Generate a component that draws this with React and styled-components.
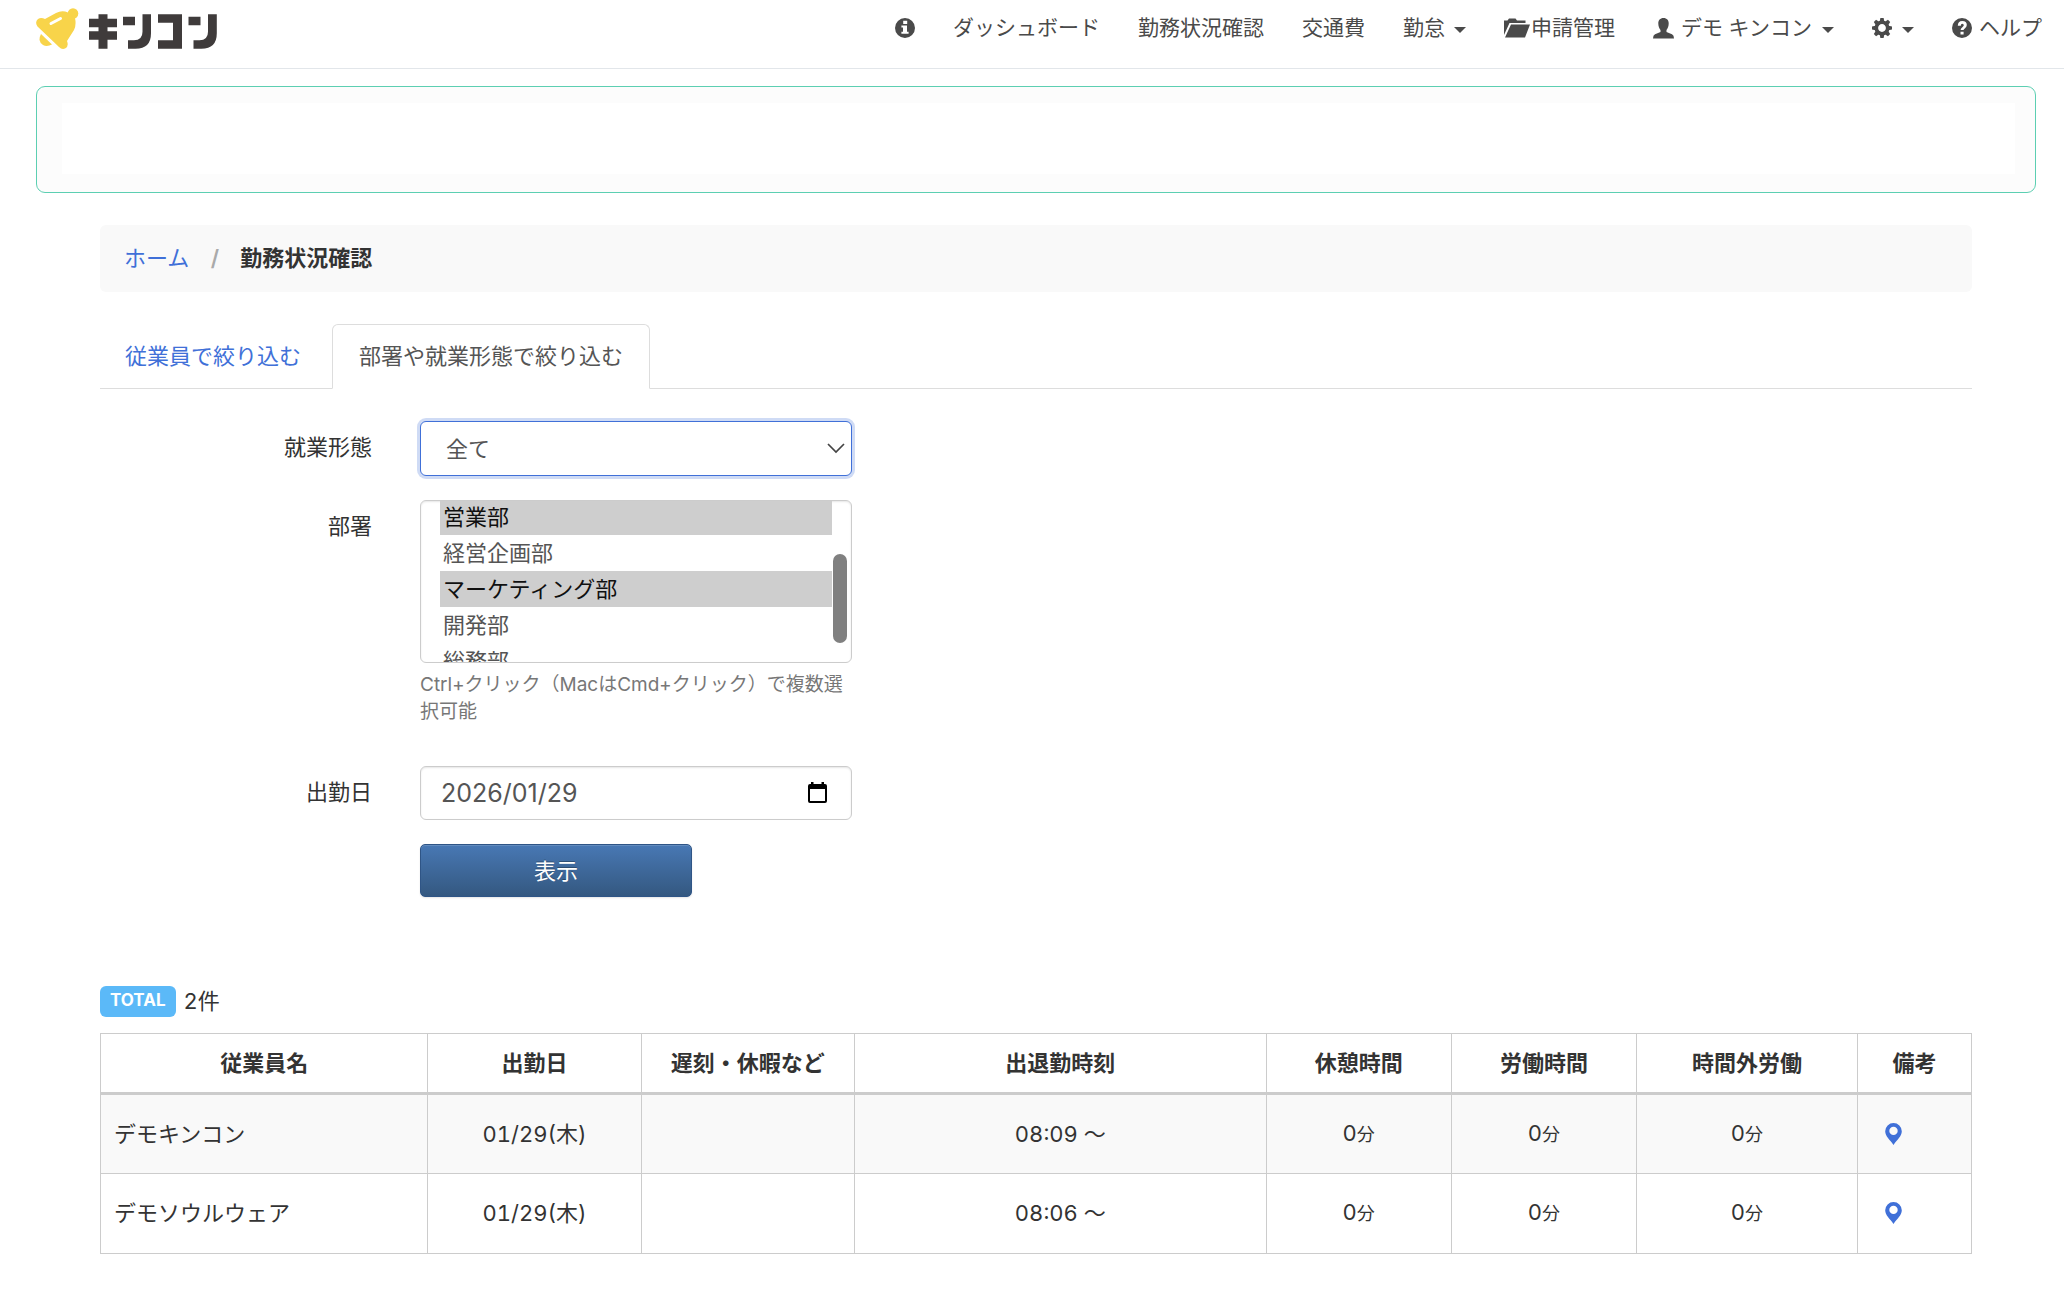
import React, { useEffect, useRef } from 'react';
import styled, { createGlobalStyle } from 'styled-components';

const FONT = `Inter, "Noto Sans CJK JP", sans-serif`;

const GlobalStyle = createGlobalStyle`
  *, *::before, *::after { box-sizing: border-box; }
  body {
    margin: 0;
    background: #fff;
    color: #333;
    font-family: ${FONT};
    font-size: 22px;
    line-height: 32px;
    font-variant-numeric: tabular-nums;
  }
  a { color: #4070d8; text-decoration: none; }
`;

/* ---------- header ---------- */
const Header = styled.header`
  display: flex;
  justify-content: space-between;
  height: 69px;
  padding: 0 22px 0 36px;
  border-bottom: 1px solid #e2e6ea;
`;
const Brand = styled.a`
  display: block;
  padding-top: 8px;
  height: 50px;
`;
const Nav = styled.nav`
  display: flex;
  gap: 38px;
  padding-top: 12px;
  font-size: 21px;
`;
const NavItem = styled.a`
  display: flex;
  align-items: center;
  gap: ${(p) => p.$gap || 0}px;
  height: 32px;
  color: #4a4a4a;
  white-space: nowrap;
  svg { display: block; flex: none; fill: currentColor; }
`;
const Caret = styled.span`
  margin: 4px 0 0 3px;
  border: 6px solid transparent;
  border-top-color: currentColor;
  border-bottom: 0;
`;

/* ---------- page ---------- */
const Notice = styled.section`
  height: 107px;
  margin: 17px 28px 32px 36px;
  padding: 16px 20px 18px 25px;
  border: 1px solid #5ccfb2;
  border-radius: 9px;
  background: #fcfcfc;
`;
const NoticeBody = styled.div`
  height: 100%;
  background: #fff;
`;
const Main = styled.main`
  padding: 0 92px 48px 100px;
`;
const Breadcrumb = styled.nav`
  display: flex;
  align-items: center;
  height: 67px;
  padding: 0 24px 2px;
  border-radius: 6px;
  background: #f9f9f9;
`;
const Slash = styled.span`
  width: 51px;
  text-align: center;
  color: #aaa;
  font-weight: 600;
`;
const Tabs = styled.div`
  display: flex;
  gap: 6px;
  margin-top: 32px;
  border-bottom: 1px solid #ddd;
`;
const Tab = styled.a`
  height: 65px;
  margin-bottom: -1px;
  padding: 15px ${(p) => (p.$active ? 26 : 24)}px;
  border: 1px solid ${(p) => (p.$active ? '#ddd' : 'transparent')};
  border-bottom-color: ${(p) => (p.$active ? '#fff' : 'transparent')};
  border-radius: 6px 6px 0 0;
  ${(p) => p.$active && 'background: #fff; color: #555;'}
`;

/* ---------- form ---------- */
const Form = styled.form`
  display: grid;
  grid-template-columns: 272px 432px;
  column-gap: 48px;
  row-gap: 24px;
  margin-top: 32px;
`;
const Label = styled.label`
  padding-top: 10px;
  text-align: right;
`;
const Field = styled.div`
  position: relative;
  grid-column: 2;
`;
const control = `
  display: block;
  width: 100%;
  border: 1px solid #ccc;
  border-radius: 6px;
  background: #fff;
  color: #555;
  font-family: ${FONT};
  font-size: 22px;
  outline: none;
`;
const Select = styled.select`
  ${control}
  appearance: none;
  height: 55px;
  padding: 0 25px;
  border-color: #4070d8;
  box-shadow: 0 0 0 3px rgba(64, 112, 216, 0.25);
`;
const FieldIcon = styled.svg`
  position: absolute;
  top: ${(p) => p.$top}px;
  right: ${(p) => p.$right}px;
  pointer-events: none;
`;
const ListBox = styled.select`
  ${control}
  height: 163px;
  padding: 0 19px;
  overflow: hidden;
  box-shadow: inset 0 1px 2px rgba(0, 0, 0, 0.1);
  option {
    height: 36px;
    padding: 0 3px 4px;
  }
`;
const ScrollThumb = styled.span`
  position: absolute;
  top: 54px;
  right: 5px;
  width: 14px;
  height: 89px;
  border-radius: 7px;
  background: #808080;
`;
const Help = styled.p`
  margin: 8px 0 17px;
  color: #777;
  font-size: 19px;
  line-height: 27px;
`;
const DateInput = styled.input`
  ${control}
  height: 54px;
  padding: 0 20px 1px;
  font-size: 25px;
  box-shadow: inset 0 1px 2px rgba(0, 0, 0, 0.1);
`;
const Submit = styled.button`
  grid-column: 2;
  width: 272px;
  height: 53px;
  padding: 0 0 3px;
  border: 1px solid #2f5586;
  border-radius: 5px;
  background: linear-gradient(#4878b4, #345880);
  box-shadow: inset 0 1px 0 rgba(255, 255, 255, 0.15), 0 1px 2px rgba(0, 0, 0, 0.1);
  color: #fff;
  font-family: ${FONT};
  font-size: 22px;
  text-shadow: 0 -1px 0 rgba(0, 0, 0, 0.3);
`;

/* ---------- results ---------- */
const Total = styled.div`
  display: flex;
  align-items: center;
  gap: 8px;
  margin-top: 88px;
`;
const Badge = styled.span`
  height: 31px;
  padding: 0 10px;
  border-radius: 6px;
  background: #5bb9f8;
  color: #fff;
  font-size: 17px;
  font-weight: 700;
  line-height: 29px;
`;
const Table = styled.table`
  width: 100%;
  margin-top: 16px;
  border-collapse: collapse;
  table-layout: fixed;
  th, td { border: 1px solid #ccc; padding: 0 13px 1px; }
  th { height: 60px; border-bottom-width: 3px; }
  td { height: 80px; }
  tbody tr:nth-child(odd) { background: #f9f9f9; }
  small { font-size: 18px; }
`;
const Col = styled.col`
  width: ${(p) => p.$width}%;
`;
const Td = styled.td`
  text-align: ${(p) => (p.$left ? 'left' : 'center')};
`;
const PinLink = styled.a`
  display: block;
  padding-left: 14px;
  svg { display: block; }
`;

/* ---------- drawings ---------- */
const Logo = () => (
  <svg width="182" height="42" viewBox="0 0 182 42" role="img" aria-label="キンコン">
    <g fill="#f8d44a">
      <circle cx="37" cy="5.500" r="5.300" />
      <path d="M1.500 18.500 Q-1.500 14 2 11 Q5 8.800 9 11 L20 5 Q26 2 32 4.500 L39 10 Q40.500 17 38 22 L31 33 Q33 38 29.500 40.300 Q26 42 23 39 Z" />
      <path d="M5 26 L16 36.500 Q11 39 7 37 Q1 33 5 26 Z" />
    </g>
    <path d="M15 15.500 L24.500 10.500" stroke="#fff" strokeWidth="3" strokeLinecap="round" />
    <g fill="#3f3b3b">
      <path d="M62.500 6.300h9v4.500h9.500v8.500h-9.500v4h9.500v8.500h-9.500v9h-9v-9h-9.500v-8.500h9.500v-4h-9.500v-8.500h9.500z" />
      <path d="M87 8.800h12v8.500h-12z M106.500 6.300h8.500v19q0 15.500-15.500 15.500h-7.500v-8.500h6q8.500 0 8.500-8.500z" />
      <path d="M122 6.300h24v34.500h-24v-8.500h15v-17.500h-15z" />
      <path d="M152.500 8.800h12v8.500h-12z M172 6.300h8.800v19q0 15.500-15.500 15.500h-7.800v-8.500h6q8.500 0 8.500-8.500z" />
    </g>
  </svg>
);
const InfoIcon = () => (
  <svg width="20" height="20" viewBox="0 0 20 20">
    <path fillRule="evenodd" d="M10 0a10 10 0 1 1 0 20a10 10 0 1 1 0-20z M8.200 2.800v3.200h4v-3.200z M6.400 7.600v1.800h1.600v4.400h-1.600v1.900h7.200v-1.900h-1.600v-6.200z" />
  </svg>
);
const HelpIcon = () => (
  <svg width="20" height="20" viewBox="0 0 20 20">
    <path fillRule="evenodd" d="M10 0a10 10 0 1 1 0 20a10 10 0 1 1 0-20z M5.800 7.800h3q0-2 1.500-2t1.500 1.500q0 .8-1.200 1.600q-2 1.200-2 3.200h3q0-.9 1.200-1.700q2-1.300 2-3.300q0-4-4.500-4t-4.500 4.700z M8.500 13.700v2.900h3.100v-2.900z" />
  </svg>
);
const FolderIcon = () => (
  <svg width="27" height="20" viewBox="0 0 27 20">
    <path d="M0 17V2.500h3.500L5 .5h6.500l1.500 2h8.500V5H5.500z M7 6.500h19L21 19.500H1z" />
  </svg>
);
const UserIcon = () => (
  <svg width="21" height="21" viewBox="0 0 21 21">
    <path d="M10.500 0c3.400 0 5.200 2.300 5.200 5.500c0 2.800-1 5-2.200 6.400v2l5.500 2.300q2 .9 2 4.300H0q0-3.400 2-4.300l5.500-2.300v-2c-1.200-1.400-2.200-3.600-2.200-6.400C5.300 2.300 7.100 0 10.500 0z" />
  </svg>
);
const CogIcon = () => (
  <svg width="20" height="20" viewBox="-10 -10 20 20">
    <circle r="5.700" fill="none" stroke="currentColor" strokeWidth="3.600" />
    {[0, 45, 90, 135, 180, 225, 270, 315].map((a) => (
      <path key={a} d="M-2.300-6.500L-1.600-10H1.600L2.300-6.500z" transform={`rotate(${a})`} />
    ))}
  </svg>
);
const PinIcon = () => (
  <svg width="17" height="22" viewBox="0 0 17 22" fill="#4070d8">
    <path fillRule="evenodd" d="M8.500 0a8.300 8.300 0 0 1 8.300 8.300c0 5-4.800 8.500-8.300 13.700C5 16.800.2 13.300.2 8.300A8.300 8.300 0 0 1 8.500 0z M8.500 3.700a4.200 4.200 0 1 0 0 8.400a4.200 4.200 0 1 0 0-8.400z" />
  </svg>
);

const COLUMNS = [
  ['従業員名', 17.5],
  ['出勤日', 11.4],
  ['遅刻・休暇など', 11.4],
  ['出退勤時刻', 22],
  ['休憩時間', 9.9],
  ['労働時間', 9.9],
  ['時間外労働', 11.8],
  ['備考', 6.1],
];
const ROWS = [
  { name: 'デモキンコン', date: '01/29(木)', time: '08:09 〜' },
  { name: 'デモソウルウェア', date: '01/29(木)', time: '08:06 〜' },
];
const DEPARTMENTS = ['営業部', '経営企画部', 'マーケティング部', '開発部', '総務部'];

const Minutes = () => (
  <Td>0<small>分</small></Td>
);

export default function App() {
  const listRef = useRef(null);
  useEffect(() => {
    listRef.current.scrollTop = 2;
  }, []);

  return (
    <>
      <GlobalStyle />
      <Header>
        <Brand href="#"><Logo /></Brand>
        <Nav>
          <NavItem href="#" aria-label="お知らせ"><InfoIcon /></NavItem>
          <NavItem href="#">ダッシュボード</NavItem>
          <NavItem href="#">勤務状況確認</NavItem>
          <NavItem href="#">交通費</NavItem>
          <NavItem href="#" $gap={6}>勤怠<Caret /></NavItem>
          <NavItem href="#"><FolderIcon />申請管理</NavItem>
          <NavItem href="#" $gap={7}><UserIcon />デモ キンコン<Caret /></NavItem>
          <NavItem href="#" $gap={7} aria-label="設定"><CogIcon /><Caret /></NavItem>
          <NavItem href="#" $gap={7}><HelpIcon />ヘルプ</NavItem>
        </Nav>
      </Header>
      <Notice><NoticeBody /></Notice>
      <Main>
        <Breadcrumb>
          <a href="#">ホーム</a>
          <Slash>/</Slash>
          <strong>勤務状況確認</strong>
        </Breadcrumb>
        <Tabs>
          <Tab href="#">従業員で絞り込む</Tab>
          <Tab href="#" $active>部署や就業形態で絞り込む</Tab>
        </Tabs>
        <Form onSubmit={(e) => e.preventDefault()}>
          <Label htmlFor="type">就業形態</Label>
          <Field>
            <Select id="type"><option>全て</option></Select>
            <FieldIcon $top={22} $right={7} width="18" height="11" viewBox="0 0 18 11">
              <path d="M1 1l8 8l8-8" fill="none" stroke="#444" strokeWidth="1.700" />
            </FieldIcon>
          </Field>
          <Label htmlFor="dept">部署</Label>
          <Field>
            <ListBox
              id="dept"
              ref={listRef}
              multiple
              size={4}
              defaultValue={['営業部', 'マーケティング部']}
            >
              {DEPARTMENTS.map((d) => <option key={d}>{d}</option>)}
            </ListBox>
            <ScrollThumb />
            <Help>Ctrl+クリック（MacはCmd+クリック）で複数選択可能</Help>
          </Field>
          <Label htmlFor="date">出勤日</Label>
          <Field>
            <DateInput id="date" type="text" defaultValue="2026/01/29" />
            <FieldIcon $top={16} $right={25} width="19" height="21" viewBox="0 0 19 21">
              <path fillRule="evenodd" d="M3 0h2.500v2h8V0H16v2h1q2 0 2 2v15q0 2-2 2H2q-2 0-2-2V4q0-2 2-2h1z M2 7v12h15V7z" />
            </FieldIcon>
          </Field>
          <Submit type="submit">表示</Submit>
        </Form>
        <Total><Badge>TOTAL</Badge>2件</Total>
        <Table>
          <colgroup>{COLUMNS.map(([t, w]) => <Col key={t} $width={w} />)}</colgroup>
          <thead>
            <tr>{COLUMNS.map(([t]) => <th key={t} scope="col">{t}</th>)}</tr>
          </thead>
          <tbody>
            {ROWS.map((r) => (
              <tr key={r.name}>
                <Td $left>{r.name}</Td>
                <Td>{r.date}</Td>
                <Td />
                <Td>{r.time}</Td>
                <Minutes />
                <Minutes />
                <Minutes />
                <Td $left><PinLink href="#" aria-label="位置情報"><PinIcon /></PinLink></Td>
              </tr>
            ))}
          </tbody>
        </Table>
      </Main>
    </>
  );
}
